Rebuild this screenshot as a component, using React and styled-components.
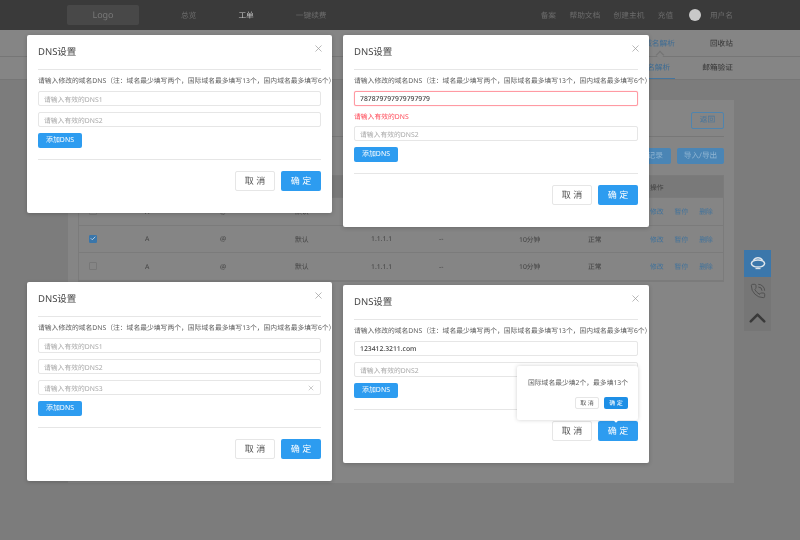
import React from "react";
import styled, { createGlobalStyle } from "styled-components";
import { X, PhoneCall, ChevronUp, Check } from "lucide-react";

const GlobalStyle = createGlobalStyle`
  html, body {
    margin: 0;
    padding: 0;
    background: #7c7c7c;
  }
  * {
    box-sizing: border-box;
  }
`;

const FONT = `"Noto Sans", "Noto Sans CJK SC", sans-serif`;

const rows = [
  { id: 1, checked: false },
  { id: 2, checked: true },
  { id: 3, checked: false },
];

function Headset() {
  return (
    <svg width="16" height="13" viewBox="0 0 16 13" fill="none" stroke="#dfe6ec" strokeWidth="1.5">
      <ellipse cx="8" cy="6.5" rx="6.6" ry="3.6" />
      <path d="M3.5 3.4a5.2 5.2 0 0 1 9 0" />
      <path d="M5.5 11.6h5" strokeWidth="1.1" />
    </svg>
  );
}

function DnsInput({ placeholder, value, error, clearable }) {
  return (
    <InputBox $error={error}>
      {value ? <InputValue>{value}</InputValue> : <InputHint>{placeholder}</InputHint>}
      {clearable && <X size={8} color="#999" strokeWidth={1.5} />}
    </InputBox>
  );
}

function DnsModal({ left, top, width, children, popover }) {
  return (
    <Modal $left={left} $top={top} $width={width}>
      <CloseBtn>
        <X size={11} color="#999" strokeWidth={1.5} />
      </CloseBtn>
      <ModalTitle>DNS设置</ModalTitle>
      <Label>请输入修改的域名DNS（注：域名最少填写两个，国际域名最多填写13个，国内域名最多填写6个）</Label>
      <Fields>{children}</Fields>
      <AddBtn>添加DNS</AddBtn>
      <FooterLine />
      <Footer>
        <CancelBtn>取 消</CancelBtn>
        <OkBtn>确 定</OkBtn>
      </Footer>
      {popover}
    </Modal>
  );
}

export default function App() {
  return (
    <Page>
      <GlobalStyle />
      <Header>
        <Logo>Logo</Logo>
        <NavLeft>
          <NavItem>总览</NavItem>
          <NavItem $active>工单</NavItem>
          <NavItem>一键续费</NavItem>
        </NavLeft>
        <NavRight>
          <NavItem>备案</NavItem>
          <NavItem>帮助文档</NavItem>
          <NavItem>创建主机</NavItem>
          <NavItem>充值</NavItem>
          <Avatar />
          <NavItem>用户名</NavItem>
        </NavRight>
      </Header>

      <TabRow>
        <TabItem $active>域名解析</TabItem>
        <TabItem>回收站</TabItem>
      </TabRow>
      <SubTabRow>
        <SubTabItem $active>域名解析</SubTabItem>
        <SubTabItem>邮箱验证</SubTabItem>
      </SubTabRow>

      <Card>
        <CardTop>
          <BackBtn>返回</BackBtn>
        </CardTop>
        <Actions>
          <ActionBtn>添加记录</ActionBtn>
          <ActionBtn>导入/导出</ActionBtn>
        </Actions>
        <Table>
          <TableRow $head>
            <Cell $w={561} />
            <Cell>操作</Cell>
          </TableRow>
          {rows.map((row) => (
            <TableRow key={row.id}>
              <Cell $w={56}>
                <CheckBox $checked={row.checked}>
                  {row.checked && <Check size={7} color="#dfe6ec" strokeWidth={3} />}
                </CheckBox>
              </Cell>
              <Cell $w={75}>A</Cell>
              <Cell $w={75}>@</Cell>
              <Cell $w={76}>默认</Cell>
              <Cell $w={68}>1.1.1.1</Cell>
              <Cell $w={80}>--</Cell>
              <Cell $w={69}>10分钟</Cell>
              <Cell $w={62}>正常</Cell>
              <Cell>
                <RowLinks>
                  <RowLink>修改</RowLink>
                  <RowLink>暂停</RowLink>
                  <RowLink>删除</RowLink>
                </RowLinks>
              </Cell>
            </TableRow>
          ))}
        </Table>
      </Card>

      <SideBar>
        <SideBtn $active>
          <Headset />
        </SideBtn>
        <SideBtn>
          <PhoneCall size={16} color="#4b4b4b" strokeWidth={1.3} />
        </SideBtn>
        <SideBtn>
          <ChevronUp size={28} color="#3a3a3a" strokeWidth={2.2} />
        </SideBtn>
      </SideBar>

      <DnsModal left={27} top={35} width={305}>
        <DnsInput placeholder="请输入有效的DNS1" />
        <DnsInput placeholder="请输入有效的DNS2" />
      </DnsModal>

      <DnsModal left={343} top={35} width={306}>
        <ErrorGroup>
          <DnsInput value="787879797979797979" error />
          <ErrorText>请输入有效的DNS</ErrorText>
        </ErrorGroup>
        <DnsInput placeholder="请输入有效的DNS2" />
      </DnsModal>

      <DnsModal left={27} top={282} width={305}>
        <DnsInput placeholder="请输入有效的DNS1" />
        <DnsInput placeholder="请输入有效的DNS2" />
        <DnsInput placeholder="请输入有效的DNS3" clearable />
      </DnsModal>

      <DnsModal
        left={343}
        top={285}
        width={306}
        popover={
          <Popover>
            <PopText>国际域名最少填2个，最多填13个</PopText>
            <PopActions>
              <PopCancel>取 消</PopCancel>
              <PopOk>确 定</PopOk>
            </PopActions>
          </Popover>
        }
      >
        <DnsInput value="123412.3211.com" />
        <DnsInput placeholder="请输入有效的DNS2" />
      </DnsModal>
    </Page>
  );
}

// the page behind the dialogs is painted in its dimmed colours
const Page = styled.div`
  position: relative;
  width: 800px;
  height: 540px;
  overflow: hidden;
  font-family: ${FONT};
  text-rendering: geometricPrecision;
  filter: blur(0.4px);
`;
const Header = styled.div`
  height: 30px;
  padding: 0 67px;
  background: #3a3a3a;
  display: flex;
  align-items: center;
`;
const Logo = styled.div`
  width: 72px;
  height: 20px;
  margin-right: 42px;
  border-radius: 2px;
  background: #484848;
  color: #787878;
  font-size: 9px;
  line-height: 20px;
  text-align: center;
`;
const NavLeft = styled.div`
  display: flex;
  gap: 42px;
`;
const NavRight = styled.div`
  margin-left: auto;
  display: flex;
  align-items: center;
  gap: 13.4px;
`;
const NavItem = styled.span`
  font-size: 7.7px;
  color: ${(props) => (props.$active ? "#c4c4c4" : "#6c6c6c")};
`;
const Avatar = styled.div`
  width: 12px;
  height: 12px;
  margin-left: 2px;
  margin-right: -4px;
  border-radius: 50%;
  background: #c8c8c8;
`;
const TabRow = styled.div`
  height: 26px;
  padding: 0 67px;
  background: #858585;
  display: flex;
  justify-content: flex-end;
  align-items: center;
  gap: 35px;
`;
const TabItem = styled.span`
  position: relative;
  font-size: 7.7px;
  color: ${(props) => (props.$active ? "#3d6c94" : "#333")};
  &::after {
    content: ${(props) => (props.$active ? '""' : "none")};
    position: absolute;
    left: 13px;
    bottom: -9px;
    width: 5px;
    height: 5px;
    background: #858585;
    border-top: 1px solid #737373;
    border-left: 1px solid #737373;
    transform: rotate(45deg);
  }
`;
const SubTabRow = styled.div`
  height: 24px;
  padding: 0 67px;
  background: #858585;
  border-top: 1px solid #767676;
  border-bottom: 1px solid #767676;
  display: flex;
  justify-content: flex-end;
  gap: 27px;
`;
const SubTabItem = styled.span`
  padding: 0 5px;
  margin-right: -5px;
  font-size: 7.7px;
  line-height: 22px;
  color: ${(props) => (props.$active ? "#3d6c94" : "#333")};
  border-bottom: ${(props) => (props.$active ? "1px solid #45759e" : "none")};
`;
const Card = styled.div`
  width: 666px;
  height: 383px;
  margin: 20px 0 0 68px;
  padding: 0 10px;
  background: #858585;
`;
const CardTop = styled.div`
  height: 37px;
  padding-top: 12px;
  border-bottom: 1px solid #777;
  display: flex;
  justify-content: flex-end;
`;
const BackBtn = styled.div`
  width: 33px;
  height: 17px;
  border: 1px solid #4f84ae;
  border-radius: 2px;
  color: #46759d;
  font-size: 7.7px;
  line-height: 15px;
  text-align: center;
`;
const Actions = styled.div`
  height: 38px;
  padding-top: 11px;
  display: flex;
  justify-content: flex-end;
  gap: 6px;
`;
const ActionBtn = styled.div`
  width: 47px;
  height: 16px;
  border-radius: 2px;
  background: #4a85b5;
  color: #8fb4d2;
  font-size: 7.7px;
  line-height: 16px;
  text-align: center;
`;
const Table = styled.div`
  border: 1px solid #7b7b7b;
`;
const TableRow = styled.div`
  height: ${(props) => (props.$head ? "22px" : "27.5px")};
  padding-left: 10px;
  background: ${(props) => (props.$head ? "#797979" : "transparent")};
  border-bottom: 1px solid #7b7b7b;
  display: flex;
  align-items: center;
`;
const Cell = styled.div`
  flex: ${(props) => (props.$w ? `0 0 ${props.$w}px` : "1")};
  font-size: 6.8px;
  color: #404040;
`;
const CheckBox = styled.div`
  width: 8px;
  height: 8px;
  border: 1px solid ${(props) => (props.$checked ? "#3a76aa" : "#777")};
  border-radius: 1px;
  background: ${(props) => (props.$checked ? "#3a76aa" : "#858585")};
  display: flex;
  align-items: center;
  justify-content: center;
`;
const RowLinks = styled.div`
  display: flex;
  gap: 11px;
`;
const RowLink = styled.span`
  color: #3f729c;
`;
const SideBar = styled.div`
  position: absolute;
  left: 744px;
  top: 250px;
  width: 27px;
  display: flex;
  flex-direction: column;
  background: #767676;
`;
const SideBtn = styled.div`
  height: 27px;
  background: ${(props) => (props.$active ? "#3b77ab" : "transparent")};
  display: flex;
  align-items: center;
  justify-content: center;
`;
const Modal = styled.div`
  position: absolute;
  left: ${(props) => props.$left}px;
  top: ${(props) => props.$top}px;
  width: ${(props) => props.$width}px;
  padding: 0 11px 22px;
  border-radius: 2px;
  background: #fff;
  box-shadow: 0 1px 4px rgba(0, 0, 0, 0.2);
`;
const CloseBtn = styled.div`
  position: absolute;
  top: 8px;
  right: 8px;
  display: flex;
`;
const ModalTitle = styled.div`
  height: 35px;
  border-bottom: 1px solid #e6e6e6;
  color: #444;
  font-size: 9.5px;
  line-height: 34px;
`;
const Label = styled.div`
  height: 21px;
  margin-right: -8px;
  color: #5c5c5c;
  font-size: 6.8px;
  line-height: 22px;
  white-space: nowrap;
`;
const Fields = styled.div`
  display: flex;
  flex-direction: column;
  gap: 6px;
`;
const InputBox = styled.div`
  height: 15px;
  padding: 0 5px;
  border: 1px solid ${(props) => (props.$error ? "#ff9aa3" : "#e6e6e6")};
  border-radius: 2px;
  background: #fff;
  box-shadow: ${(props) => (props.$error ? "0 0 1px #ff9aa3" : "none")};
  font-size: 6.8px;
  display: flex;
  align-items: center;
  justify-content: space-between;
`;
const InputHint = styled.span`
  color: #a8a8a8;
`;
const InputValue = styled.span`
  color: #444;
  font-weight: 500;
`;
const ErrorGroup = styled.div`
  display: flex;
  flex-direction: column;
`;
const ErrorText = styled.div`
  height: 14px;
  color: #ff4a58;
  font-size: 6.8px;
  line-height: 21px;
`;
const AddBtn = styled.div`
  width: 44px;
  height: 15px;
  margin-top: 6px;
  border-radius: 2px;
  background: #2d9cf0;
  color: #fff;
  font-size: 6.9px;
  line-height: 15px;
  text-align: center;
`;
const FooterLine = styled.div`
  height: 1px;
  margin-top: 11px;
  background: #e6e6e6;
`;
const Footer = styled.div`
  margin-top: 11px;
  display: flex;
  justify-content: flex-end;
  gap: 6px;
`;
const CancelBtn = styled.div`
  width: 40px;
  height: 20px;
  border: 1px solid #e6e6e6;
  border-radius: 2px;
  background: #fff;
  color: #555;
  font-size: 9px;
  line-height: 18px;
  text-align: center;
`;
const OkBtn = styled.div`
  width: 40px;
  height: 20px;
  border-radius: 2px;
  background: #2d9cf0;
  color: #fff;
  font-size: 9px;
  line-height: 20px;
  text-align: center;
`;
const Popover = styled.div`
  position: absolute;
  left: 174px;
  bottom: 43px;
  width: 121px;
  height: 54px;
  padding: 11px 11px 0;
  border-radius: 2px;
  background: #fff;
  box-shadow: 0 0 4px rgba(0, 0, 0, 0.18);
  &::after {
    content: "";
    position: absolute;
    right: 20px;
    bottom: -2px;
    width: 4px;
    height: 4px;
    background: #fff;
    transform: rotate(45deg);
  }
`;
const PopText = styled.div`
  color: #5c5c5c;
  font-size: 6.8px;
  line-height: 11px;
  white-space: nowrap;
`;
const PopActions = styled.div`
  margin-top: 9px;
  display: flex;
  justify-content: flex-end;
  gap: 5px;
  margin-right: -1px;
`;
const PopCancel = styled.div`
  width: 24px;
  height: 12px;
  border: 1px solid #e6e6e6;
  border-radius: 2px;
  color: #555;
  font-size: 6px;
  line-height: 10px;
  text-align: center;
`;
const PopOk = styled.div`
  width: 24px;
  height: 12px;
  border-radius: 2px;
  background: #1e8fe6;
  color: #fff;
  font-size: 6px;
  line-height: 12px;
  text-align: center;
`;
